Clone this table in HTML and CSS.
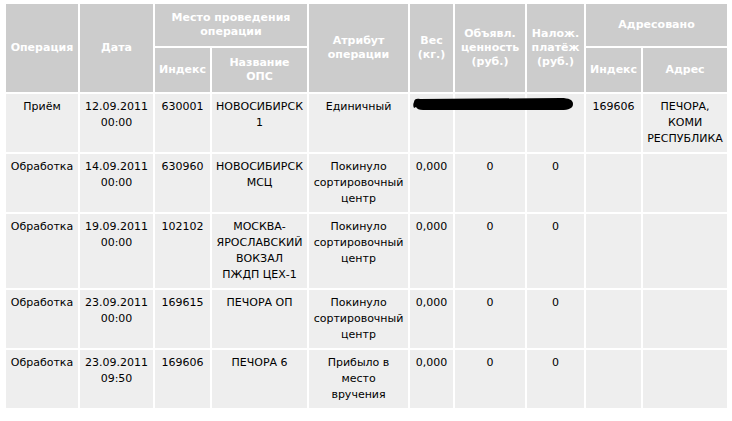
FILE: index.html
```html
<!DOCTYPE html>
<html lang="ru">
<head>
<meta charset="utf-8">
<title>Отслеживание</title>
<link rel="stylesheet" href="styles.css">
</head>
<body>
<div class="wrap">
<table class="track">
  <colgroup>
    <col class="c-op"><col class="c-date"><col class="c-idx"><col class="c-name"><col class="c-attr"><col class="c-weight"><col class="c-value"><col class="c-cod"><col class="c-aidx"><col class="c-addr">
  </colgroup>
  <thead>
    <tr class="h1">
      <th rowspan="2">Операция</th>
      <th rowspan="2">Дата</th>
      <th colspan="2">Место проведения операции</th>
      <th rowspan="2">Атрибут операции</th>
      <th rowspan="2">Вес (кг.)</th>
      <th rowspan="2">Объявл. ценность (руб.)</th>
      <th rowspan="2">Налож. платёж (руб.)</th>
      <th colspan="2">Адресовано</th>
    </tr>
    <tr class="h2">
      <th>Индекс</th>
      <th>Название<br>ОПС</th>
      <th>Индекс</th>
      <th>Адрес</th>
    </tr>
  </thead>
  <tbody>
    <tr>
      <td>Приём</td><td>12.09.2011 00:00</td><td>630001</td><td>НОВОСИБИРСК 1</td><td>Единичный</td><td></td><td></td><td></td><td>169606</td><td>ПЕЧОРА, КОМИ РЕСПУБЛИКА</td>
    </tr>
    <tr>
      <td>Обработка</td><td>14.09.2011 00:00</td><td>630960</td><td>НОВОСИБИРСК МСЦ</td><td>Покинуло сортировочный центр</td><td>0,000</td><td>0</td><td>0</td><td></td><td></td>
    </tr>
    <tr>
      <td>Обработка</td><td>19.09.2011 00:00</td><td>102102</td><td>МОСКВА-ЯРОСЛАВСКИЙ ВОКЗАЛ<br>ПЖДП ЦЕХ-1</td><td>Покинуло сортировочный центр</td><td>0,000</td><td>0</td><td>0</td><td></td><td></td>
    </tr>
    <tr>
      <td>Обработка</td><td>23.09.2011 00:00</td><td>169615</td><td>ПЕЧОРА ОП</td><td>Покинуло сортировочный центр</td><td>0,000</td><td>0</td><td>0</td><td></td><td></td>
    </tr>
    <tr>
      <td>Обработка</td><td>23.09.2011 09:50</td><td>169606</td><td>ПЕЧОРА 6</td><td>Прибыло в<br>место<br>вручения</td><td>0,000</td><td>0</td><td>0</td><td></td><td></td>
    </tr>
  </tbody>
</table>
<svg class="redact" width="164" height="16" viewBox="0 0 164 16" aria-hidden="true">
  <path d="M3 6 C3 3 6 2 9 3 L150 2 C158 2 162 4 162 8 C162 12 158 14 150 14 L12 14 C8 14 6 13 5 11 L3 12 C2 10 2 8 3 6 Z" fill="#000"/>
</svg>
</div>
</body>
</html>
```

FILE: styles.css
```css
html, body {
  margin: 0;
  padding: 0;
  background: #ffffff;
}

.wrap {
  position: relative;
  width: 729px;
  padding: 2px 0 0 4px;
}

.track {
  border-collapse: separate;
  border-spacing: 2px;
  table-layout: fixed;
  width: 725px;
  font-family: "DejaVu Sans", Verdana, sans-serif;
  font-size: 11px;
  color: #000000;
}

.c-op { width: 72px; }
.c-date { width: 73px; }
.c-idx { width: 55px; }
.c-name { width: 95px; }
.c-attr { width: 99px; }
.c-weight { width: 43px; }
.c-value { width: 70px; }
.c-cod { width: 57px; }
.c-aidx { width: 55px; }
.c-addr { width: 84px; }

.track th {
  background: #cccccc;
  color: #ffffff;
  font-weight: bold;
  line-height: 14px;
  padding: 0 2px;
  text-align: center;
  vertical-align: middle;
}

.h1 { height: 42px; }
.h2 { height: 44px; }

.track td {
  background: #eeeeee;
  line-height: 16px;
  padding: 5px 3px 5px;
  text-align: center;
  vertical-align: top;
}

.redact {
  position: absolute;
  left: 411px;
  top: 96px;
}
```
